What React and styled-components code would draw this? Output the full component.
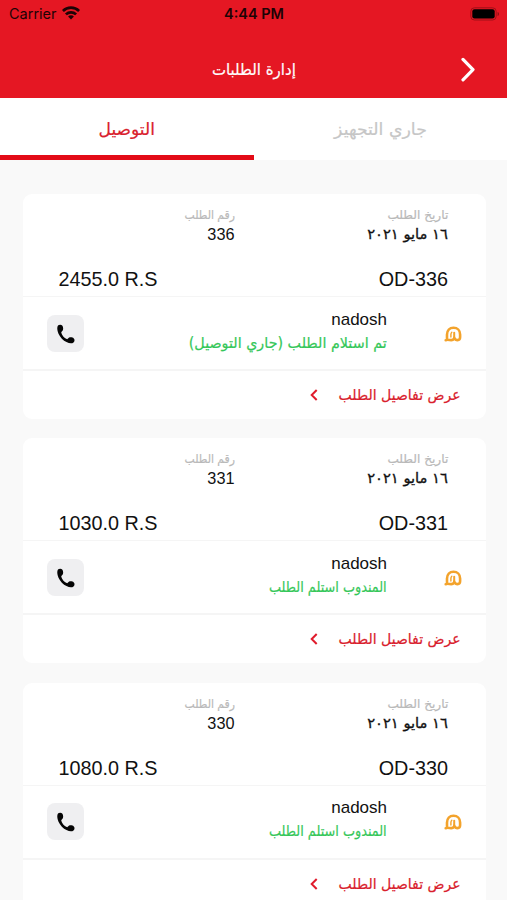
import React from 'react'
import styled, { createGlobalStyle } from 'styled-components'

const orders = [
  { id: '336', price: '2455.0 R.S', name: 'nadosh', status: 'تم استلام الطلب (جاري التوصيل)', statusScale: 0.953 },
  { id: '331', price: '1030.0 R.S', name: 'nadosh', status: 'المندوب استلم الطلب', statusScale: 0.855 },
  { id: '330', price: '1080.0 R.S', name: 'nadosh', status: 'المندوب استلم الطلب', statusScale: 0.855 },
]

const WifiIcon = () => (
  <svg width="18" height="14" viewBox="0 0 18 14" fill="none" stroke="#1d0305" strokeWidth="2.7">
    <path d="M0.9 5C5.4 0.5 12.6 0.5 17.1 5" />
    <path d="M3.9 8.4C6.8 5.6 11.2 5.6 14.1 8.4" />
    <path d="M9 13.4L6.1 10.4C7.7 8.9 10.3 8.9 11.9 10.4Z" fill="#1d0305" stroke="none" />
  </svg>
)

const BatteryIcon = () => (
  <svg width="30" height="14" viewBox="0 0 30 14">
    <rect x="0.8" y="0.8" width="25.4" height="12.2" rx="3.6" fill="none" stroke="#a01018" strokeWidth="1" />
    <rect x="2.3" y="2.3" width="22.4" height="9.2" rx="2.2" fill="#000" />
    <path d="M27.6 4.9C29.4 5.4 29.4 8.4 27.6 8.9Z" fill="#8c0e15" />
  </svg>
)

const PhoneIcon = () => (
  <svg width="18" height="20" viewBox="0 0 18 20" fill="#050505">
    <path d="M1 1.6C2 0.6 4.4 0.5 5.4 1.7C6.3 3 6.4 5.2 5.7 6.4C5.2 7.2 4.1 7.5 4.3 8.7C4.8 11.1 7.2 13.9 9.7 15.1C10.7 15.5 11 14.3 11.8 13.8C13.2 13 15.6 13.3 16.8 14.4C17.9 15.5 17.7 17.5 16.5 18.5C14.8 19.9 12.2 19.5 9.5 18.1C6.2 16.5 3.1 13.3 1.5 9.7C0.3 6.9 -0.3 3.2 1 1.6Z" />
  </svg>
)

const StoreLogo = () => (
  <svg width="18" height="16" viewBox="0 0 18 16" fill="none" stroke="#f3a32c" strokeWidth="2.6" strokeLinecap="round">
    <path d="M1.7 14.2C2.9 14.2 3.2 13 3 11.5V8.6C3 4.4 5.6 1.7 9.5 1.7C13.4 1.7 16.1 4.4 16.1 8.4V11.3C16.1 13.1 15.1 14.1 13.6 14.1C12 14.1 10.8 13.2 10.3 12C9.7 13.4 8.7 14.1 7.3 14.1C6 14.1 4.8 14 3.6 13.8" />
    <path d="M10.2 12V6.8" strokeWidth="2" />
    <path d="M6.9 11V8.4C6.9 7.4 7.2 6.8 7.8 6.3" strokeWidth="1.4" />
  </svg>
)

const OrderCard = ({ order }) => (
  <Card>
    <Summary>
      <Column>
        <Label $scale={1.01}>تاريخ الطلب</Label>
        <ArabicValue $scale={1.05}>١٦ مايو ٢٠٢١</ArabicValue>
        <Big>OD-{order.id}</Big>
      </Column>
      <Column $second>
        <Label $scale={0.9}>رقم الطلب</Label>
        <Value>{order.id}</Value>
        <Big $price>{order.price}</Big>
      </Column>
    </Summary>
    <Courier>
      <LogoBox>
        <StoreLogo />
      </LogoBox>
      <Info>
        <Name>{order.name}</Name>
        <Status $scale={order.statusScale}>{order.status}</Status>
      </Info>
      <CallButton>
        <PhoneIcon />
      </CallButton>
    </Courier>
    <Details>
      <DetailsText $scale={0.935}>عرض تفاصيل الطلب</DetailsText>
      <svg width="8" height="12" viewBox="0 0 8 12" fill="none" stroke="#e01b2c" strokeWidth="2">
        <path d="M6.7 1L1.7 6L6.7 11" />
      </svg>
    </Details>
  </Card>
)

const App = () => {
  return (
    <Screen>
      <GlobalStyle />
      <Header>
        <StatusBar>
          <Carrier>
            Carrier
            <WifiIcon />
          </Carrier>
          <Time>4:44 PM</Time>
          <Battery>
            <BatteryIcon />
          </Battery>
        </StatusBar>
        <NavBar>
          <Title $scale={0.935} $center>إدارة الطلبات</Title>
          <Chevron>
            <svg width="16" height="26" viewBox="0 0 16 26" fill="none" stroke="#fff" strokeWidth="3.2" strokeLinecap="round" strokeLinejoin="round">
              <path d="M2 2.4L12 12.6L2 22.8" />
            </svg>
          </Chevron>
        </NavBar>
      </Header>
      <Tabs>
        <Tab $active>
          <TabText $center>التوصيل</TabText>
        </Tab>
        <Tab>
          <TabText $scale={1.02} $center>جاري التجهيز</TabText>
        </Tab>
      </Tabs>
      <List>
        {orders.map((order) => (
          <OrderCard key={order.id} order={order} />
        ))}
      </List>
    </Screen>
  )
}

const GlobalStyle = createGlobalStyle`
  * {
    box-sizing: border-box;
  }
  body {
    margin: 0;
    overflow: hidden;
  }
  svg {
    display: block;
    flex: none;
  }
`

const Screen = styled.div`
  width: 507px;
  height: 900px;
  overflow: hidden;
  background: #f9f9f9;
  font-family: 'Liberation Sans', 'DejaVu Sans', sans-serif;
  color: #111;
`

const Header = styled.header`
  height: 98px;
  background: #e51723;
`

const StatusBar = styled.div`
  display: grid;
  grid-template-columns: 1fr auto 1fr;
  align-items: center;
  height: 28px;
  padding: 0 7px 0 9px;
  font-family: Inter, sans-serif;
  font-size: 14.5px;
  color: #1d0305;
`

const Carrier = styled.div`
  display: flex;
  align-items: center;
  gap: 5px;
  margin-top: -2px;
`

const Time = styled.div`
  margin: -1px 1px 0 0;
  font-weight: 600;
`

const Battery = styled.div`
  display: flex;
  justify-content: flex-end;
  margin-top: -1px;
`

const NavBar = styled.div`
  display: grid;
  grid-template-columns: 1fr auto 1fr;
  align-items: center;
  height: 83px;
  padding: 0 30px;
`

/* condenses or widens the arabic face, anchored on the reading edge */
const Arabic = styled.span`
  display: block;
  direction: rtl;
  white-space: nowrap;
  font-family: 'DejaVu Sans', sans-serif;
  -webkit-text-stroke: 0.2px currentColor;
  transform: scaleX(${(p) => p.$scale || 1});
  transform-origin: ${(p) => (p.$center ? 'center' : 'right')};
`

const Title = styled(Arabic)`
  grid-column: 2;
  font-size: 16px;
  color: #fff;
`

const Chevron = styled.div`
  justify-self: end;
`

const Tabs = styled.div`
  display: flex;
  height: 62px;
  background: #fff;
`

const Tab = styled.div`
  display: flex;
  flex: 1;
  justify-content: center;
  align-items: center;
  padding-top: 5px;
  color: ${(p) => (p.$active ? '#d9202c' : '#c6c6c6')};
  border-bottom: 5px solid ${(p) => (p.$active ? '#e30b17' : '#fff')};
`

const TabText = styled(Arabic)`
  font-size: 17px;
`

const List = styled.div`
  display: flex;
  flex-direction: column;
  gap: 19.3px;
  padding: 34px 21.5px 0 22.5px;
`

const Card = styled.div`
  flex: none;
  height: 225px;
  direction: rtl;
  background: #fff;
  border-radius: 9px;
`

const Summary = styled.div`
  display: flex;
  height: 103px;
  padding: 11px 37.5px 0 0;
  border-bottom: 1px solid #f5f5f5;
`

const Column = styled.div`
  display: flex;
  flex-direction: column;
  align-items: flex-start;
  width: ${(p) => (p.$second ? '190px' : '213.5px')};
`

const Label = styled(Arabic)`
  height: 20px;
  line-height: 20px;
  font-size: 12px;
  color: #b9b9b9;
`

const Value = styled.span`
  height: 19px;
  line-height: 19px;
  font-size: 16.3px;
`

const ArabicValue = styled(Arabic)`
  height: 19px;
  line-height: 19px;
  font-size: 14px;
  -webkit-text-stroke-width: 0.3px;
`

const Big = styled.span`
  direction: ltr;
  margin-top: 23px;
  margin-right: ${(p) => (p.$price ? '77px' : '0')};
  line-height: 24px;
  font-size: 19.8px;
`

const Courier = styled.div`
  display: flex;
  align-items: center;
  height: 74px;
  padding: 0 24px 0 24.5px;
  border-bottom: 2px solid #f5f5f5;
`

const LogoBox = styled.div`
  width: 74.5px;
  padding-top: 1px;
`

const Info = styled.div`
  display: flex;
  flex: 1;
  flex-direction: column;
  align-items: flex-start;
  margin-top: -3px;
`

const Name = styled.span`
  height: 22px;
  line-height: 22px;
  font-size: 17px;
`

const Status = styled(Arabic)`
  height: 24px;
  line-height: 24px;
  font-size: 15px;
  color: #35c759;
`

const CallButton = styled.button`
  display: flex;
  justify-content: center;
  align-items: center;
  width: 37px;
  height: 37px;
  padding: 1px 0 0;
  border: 0;
  border-radius: 8px;
  background: #efeff1;
`

const Details = styled.div`
  display: flex;
  align-items: center;
  gap: 12px;
  height: 48px;
  padding-right: 25px;
`

const DetailsText = styled(Arabic)`
  font-size: 15px;
  color: #d9202c;
`

export default App
